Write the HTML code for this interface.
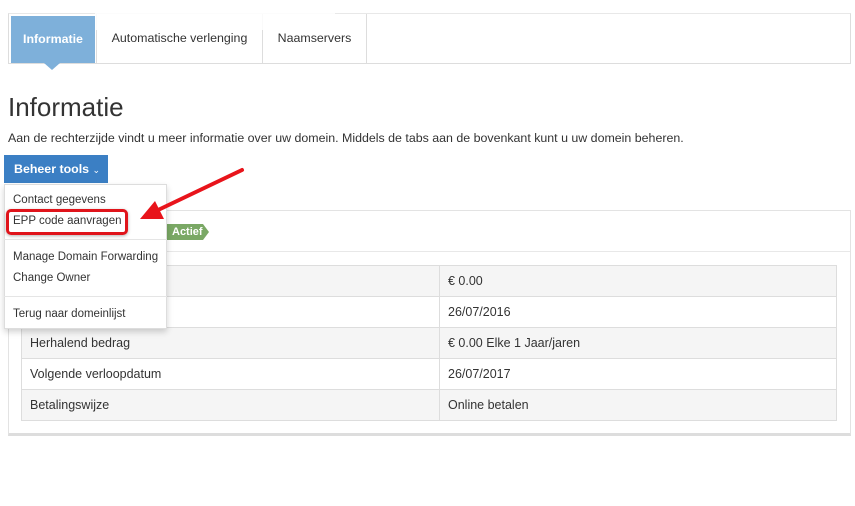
<!DOCTYPE html>
<html><head><meta charset="utf-8"><style>
*{box-sizing:border-box;margin:0;padding:0}
body{width:855px;height:506px;background:#fff;font-family:"Liberation Sans",sans-serif;color:#333;position:relative;overflow:hidden}
.a{position:absolute}
.tabs{left:8px;top:13px;width:843px;height:51px;border:1px solid #ddd;border-top:1px solid #e8e8e8}
.tab{top:0;height:49px;line-height:49px;font-size:12.4px;color:#333;border-right:1px solid #ddd;text-align:center}
.t{font-size:12.4px}
td{font-size:12.5px;height:31px;border:1px solid #ddd;padding:0 8px}
tr:nth-child(odd) td{background:#f5f5f5}
.mi{left:13px;font-size:11.5px;color:#333}
</style></head><body>
<div class="a tabs">
 <div class="a tab" style="left:2px;top:2px;width:84px;height:47px;line-height:47px;background:#7eb0da;color:#fff;font-weight:bold;font-size:12.4px;border:none">Informatie</div>
 <div class="a" style="left:35px;top:49px;width:0;height:0;border-left:8px solid transparent;border-right:8px solid transparent;border-top:7px solid #7eb0da"></div>
 <div class="a tab" style="left:87px;width:167px;border-left:1px solid #ddd">Automatische verlenging</div>
 <div class="a tab" style="left:254px;width:104px">Naamservers</div>
</div>
<div class="a" style="left:95px;top:0;width:240px;height:30px;background:rgba(255,255,255,.85)"></div>
<div class="a" style="left:8px;top:92px;font-size:26px;color:#333">Informatie</div>
<div class="a t" style="left:8px;top:131px">Aan de rechterzijde vindt u meer informatie over uw domein. Middels de tabs aan de bovenkant kunt u uw domein beheren.</div>
<div class="a" style="left:4px;top:155px;width:104px;height:28px;background:#3b7fc4;color:#fff;font-size:12.4px;font-weight:bold;line-height:28px;padding-left:10px">Beheer tools <span style="font-weight:normal;font-size:9px">&#8964;</span></div>
<div class="a" style="left:8px;top:210px;width:843px;height:226px;border:1px solid #e3e3e3;border-bottom:3px solid #ddd"></div>
<div class="a" style="left:9px;top:251px;width:841px;height:1px;background:#e8e8e8"></div>
<div class="a" style="left:167px;top:224px;height:16px;width:36px;background:#7aa865;color:#fff;font-size:11px;font-weight:bold;line-height:16px;padding-left:5px">Actief</div>
<div class="a" style="left:203px;top:224px;border-top:8px solid transparent;border-bottom:8px solid transparent;border-left:6px solid #7aa865"></div>
<table class="a" style="left:21px;top:265px;width:816px;border-collapse:collapse">
<tr><td style="width:418px"></td><td>€ 0.00</td></tr>
<tr><td></td><td>26/07/2016</td></tr>
<tr><td>Herhalend bedrag</td><td>€ 0.00 Elke 1 Jaar/jaren</td></tr>
<tr><td>Volgende verloopdatum</td><td>26/07/2017</td></tr>
<tr><td>Betalingswijze</td><td>Online betalen</td></tr>
</table>
<div class="a" style="left:4px;top:184px;width:163px;height:145px;background:#fff;border:1px solid #ddd;box-shadow:0 3px 6px rgba(0,0,0,.18)"></div>
<div class="a mi" style="top:194px">Contact gegevens</div>
<div class="a mi" style="top:215px">EPP code aanvragen</div>
<div class="a" style="left:4px;top:239px;width:163px;height:1px;background:#e5e5e5"></div>
<div class="a mi" style="top:251px">Manage Domain Forwarding</div>
<div class="a mi" style="top:272px">Change Owner</div>
<div class="a" style="left:4px;top:296px;width:163px;height:1px;background:#e5e5e5"></div>
<div class="a mi" style="top:308px">Terug naar domeinlijst</div>
<div class="a" style="left:6px;top:209px;width:122px;height:26px;border:3px solid #e0141b;border-radius:5px;box-shadow:0 1px 3px rgba(0,0,0,.3)"></div>
<svg class="a" style="left:0;top:0" width="855" height="506"><line x1="242" y1="170" x2="156" y2="211" stroke="#e8141b" stroke-width="4" stroke-linecap="round"/><polygon points="140,219 155,201 164,219" fill="#e8141b"/></svg>
</body></html>
